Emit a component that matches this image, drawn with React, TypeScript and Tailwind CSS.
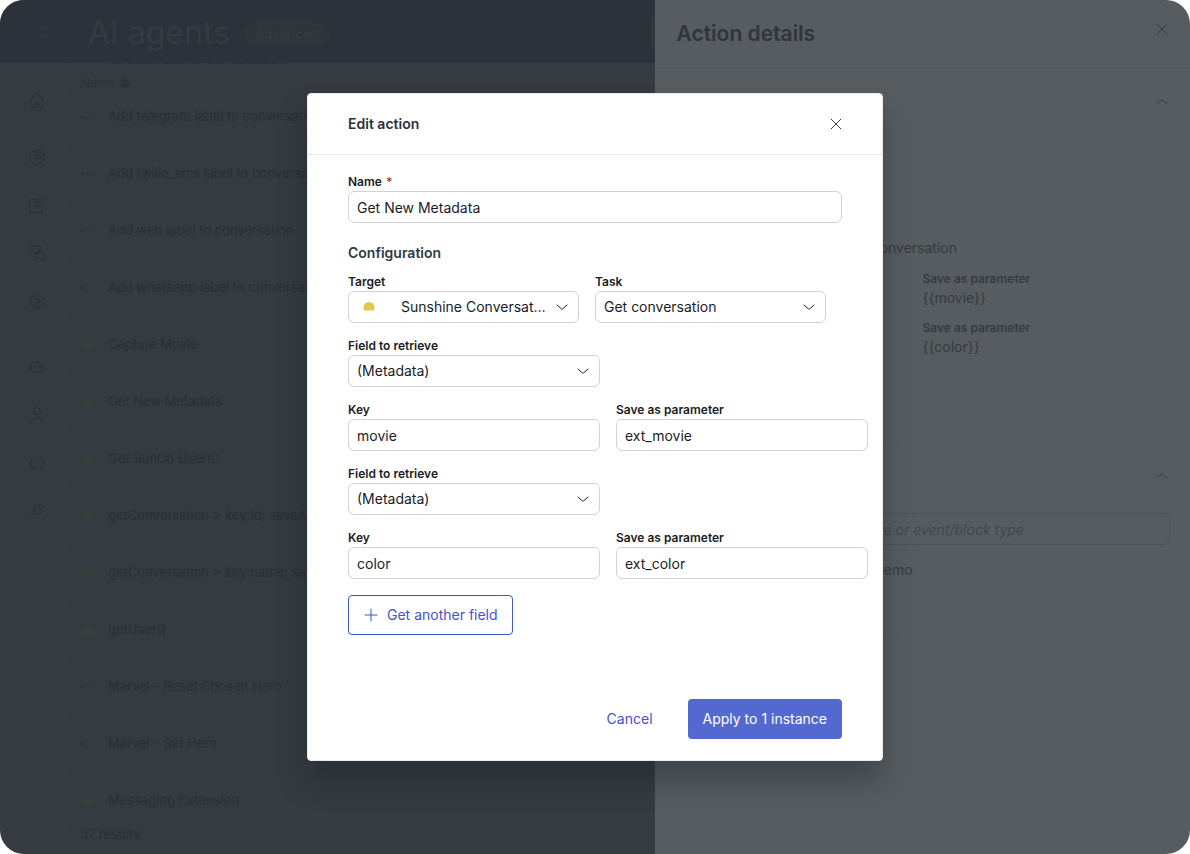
import type { ReactNode } from "react";

type Action = { name: string; sunshine?: boolean };

const actions: Action[] = [
  { name: "Add ios label to conversation" },
  { name: "Add telegram label to conversation" },
  { name: "Add twilio_sms label to conversation" },
  { name: "Add web label to conversation" },
  { name: "Add whatsapp label to conversation" },
  { name: "Capture Movie", sunshine: true },
  { name: "Get New Metadata", sunshine: true },
  { name: "Get SunCo UserID", sunshine: true },
  { name: "getConversation > key:id; saveAs:id", sunshine: true },
  { name: "getConversation > key:name; saveAs:name", sunshine: true },
  { name: "getUser()", sunshine: true },
  { name: "Marvel - Reset Chosen Hero" },
  { name: "Marvel - Set Hero" },
  { name: "Messaging Extension", sunshine: true },
];

function Icon({ children, className = "size-4" }: { children: ReactNode; className?: string }) {
  return (
    <svg
      viewBox="0 0 16 16"
      fill="none"
      stroke="currentColor"
      strokeLinecap="round"
      strokeLinejoin="round"
      className={`shrink-0 ${className}`}
      aria-hidden="true"
    >
      {children}
    </svg>
  );
}

const CloseIcon = () => (
  <Icon className="size-4">
    <path d="M3 3l10 10M13 3L3 13" />
  </Icon>
);

const ChevronUp = () => (
  <Icon className="size-4">
    <path d="M3 10l4.6-4a.6.6 0 0 1 .8 0L13 10" />
  </Icon>
);

// Sidebar entries, each with the gap that separates it from the one above
const navItems: { label: string; space: string; icon: ReactNode }[] = [
  {
    label: "Home",
    space: "mt-0",
    icon: <path d="M2.500 8.500H.8L7.600 1a.6.6 0 0 1 .8 0l6.800 7.500h-1.700M2.500 8.500v6c0 .6.3 1 .8 1h2.900v-3.700c0-.6.4-1 1-1h1.600c.6 0 1 .4 1 1v3.700h2.900c.5 0 .8-.4.8-1v-6" />,
  },
  {
    label: "Analytics",
    space: "mt-[41px]",
    icon: <path d="M6.500 1.500a7 7 0 1 0 8 8h-8zM9.300.6v6.100h6.100A6.200 6.200 0 0 0 9.300.6z" />,
  },
  {
    label: "Compose",
    space: "mt-8",
    icon: <path d="M7.500 2.500h-6c-.6 0-1 .4-1 1v11c0 .6.4 1 1 1h11c.6 0 1-.4 1-1v-6M12.800.9a1 1 0 0 1 1.400 0l1 1a1 1 0 0 1 0 1.400L9.300 9.200 6.500 9.700 7 6.800z" />,
  },
  {
    label: "Conversations",
    space: "mt-8",
    icon: <path d="M3.300 6.300L1.800 8.300V6A2.800 2.800 0 0 1 3.300.8h6a2.700 2.700 0 0 1 0 5.400M7.200 7.700h5.600a2.700 2.700 0 0 1 1.700 4.800v2.800l-2.400-2.300H7.200a2.600 2.600 0 0 1 0-5.300z" />,
  },
  {
    label: "Settings",
    space: "mt-8",
    icon: (
      <>
        <path d="M6.600.8h2.800l.5 2.200 1.500.9 2.200-.7 1.400 2.400-1.600 1.600v1.700l1.600 1.600-1.400 2.400-2.200-.7-1.500.9-.5 2.200H6.600l-.5-2.200-1.500-.9-2.200.7L1 10.500l1.600-1.600V7.200L1 5.600l1.400-2.400 2.200.7L6.100 3z" />
        <circle cx="8" cy="8" r="2.600" />
      </>
    ),
  },
  {
    label: "Bots",
    space: "mt-[50px]",
    icon: (
      <>
        <rect x="2.500" y="3.500" width="11" height="10" rx="2" />
        <path d="M8 3.500V2M.5 6.500v4M15.500 6.500v4M5 11.500h.1M7 11.500h.1M9 11.500h.1M11 11.500h.1" />
        <circle cx="5.600" cy="7.500" r="1" />
        <circle cx="10.400" cy="7.500" r="1" />
      </>
    ),
  },
  {
    label: "Users",
    space: "mt-8",
    icon: (
      <>
        <circle cx="8" cy="4" r="3.500" />
        <path d="M2.200 15.500a5.900 5.900 0 0 1 11.600 0" />
      </>
    ),
  },
  {
    label: "Parameters",
    space: "mt-8",
    icon: <path d="M5 2H4.300C3 2 2.300 2.800 2.300 4v2.300C2.300 7.300 1.500 8 .5 8c1 0 1.800.7 1.800 1.700V12c0 1.200.7 2 2 2H5M11 2h.7c1.300 0 2 .8 2 2v2.300c0 1 .8 1.700 1.800 1.700-1 0-1.800.7-1.800 1.700V12c0 1.200-.7 2-2 2H11" />,
  },
  {
    label: "Integrations",
    space: "mt-8",
    icon: <path d="M.5 15.500L5 11M9.500 3.500L12.500.5M12.500 6.500l3-3M8 2.500l5.500 5.500-2.600 2.600a2 2 0 0 1-2.800 0L5.400 7.900a2 2 0 0 1 0-2.800z" />,
  },
];

function Sun({ className }: { className: string }) {
  return (
    <svg viewBox="0 0 12 10" className={`h-[10px] w-3 shrink-0 ${className}`} aria-hidden="true">
      <path d="M1.100 9.500C.7 8.600.5 7.600.5 6.500a5.500 5.500 0 0 1 11 0c0 1.100-.2 2.100-.6 3z" fill="currentColor" />
    </svg>
  );
}

function ActionIcon({ sunshine }: { sunshine?: boolean }) {
  if (sunshine) {
    return (
      <span className="flex w-4 shrink-0 justify-center">
        <Sun className="text-[#383f3b]" />
      </span>
    );
  }
  return (
    <svg viewBox="0 0 16 4" className="h-1 w-4 shrink-0" aria-hidden="true">
      <circle cx="2" cy="2" r="1.600" fill="#2b323b" />
      <circle cx="8" cy="2" r="1.600" fill="#2f3a3a" />
      <circle cx="14" cy="2" r="1.600" fill="#313a3b" />
    </svg>
  );
}

function Field({ id, label, required, className = "", children }: {
  id: string;
  label: string;
  required?: boolean;
  className?: string;
  children: ReactNode;
}) {
  return (
    <div className={`flex flex-col ${className}`}>
      <label htmlFor={id} className="h-5 text-xs leading-[22px] font-semibold text-[#1a1c1f]">
        {label}
        {required && <span className="ml-1 text-[#cc3340]">*</span>}
      </label>
      {children}
    </div>
  );
}

function TextInput({ id, value }: { id: string; value: string }) {
  return (
    <input
      id={id}
      type="text"
      defaultValue={value}
      className="h-8 w-full rounded-md border border-[#d0d2d5] bg-white px-2 text-sm text-[#1a1c1f]"
    />
  );
}

function Select({ id, value, sunshine }: { id: string; value: string; sunshine?: boolean }) {
  return (
    <div className="relative">
      <select
        id={id}
        defaultValue={value}
        className={`h-8 w-full appearance-none truncate rounded-md border border-[#d0d2d5] bg-white pr-[30px] text-sm text-[#1a1c1f] ${
          sunshine ? "pl-[52px]" : "pl-2"
        }`}
      >
        <option>{value}</option>
      </select>
      {sunshine && <Sun className="absolute top-[10px] left-[15px] text-[#e5c652]" />}
      <Icon className="pointer-events-none absolute top-2 right-[9px] size-4 text-[#1a1c1f]">
        <path d="M3 6l4.600 4a.6.6 0 0 0 .8 0L13 6" />
      </Icon>
    </div>
  );
}

function AgentsPage() {
  return (
    <div className="flex min-w-0 flex-1 flex-col bg-[#363a41] text-[#2b2f36]">
      <header className="relative z-10 flex h-[63px] shrink-0 items-center bg-[#2c3239] text-[#363a42]">
        <button aria-label="Menu" className="ml-9 flex text-[#32373e]">
          <Icon className="size-4">
            <path d="M1.500 3.500h13M1.500 8h13M1.500 12.500h13" />
          </Icon>
        </button>
        <h1 className="mt-[2px] ml-9 text-[32px] leading-10">AI agents</h1>
        <span className="mt-1 ml-[14px] rounded-full bg-[#2e353b] px-[11px] text-[13px] leading-6 font-semibold">Advanced</span>
        {/* control that the details panel partly covers */}
        <span className="absolute right-0 h-[30px] w-1 rounded-l bg-[#31373d]" />
      </header>

      <div className="flex min-h-0 flex-1">
        <nav className="flex w-[71px] shrink-0 flex-col items-center border-r border-[#343840] pt-[29px] pl-1 text-[#2a2f37]">
          {navItems.map((item) => (
            <a key={item.label} href="#" aria-label={item.label} className={item.space}>
              <Icon className="size-4">{item.icon}</Icon>
            </a>
          ))}
        </nav>

        <main className="relative min-w-0 flex-1 overflow-hidden">
          <div className="absolute top-[10px] left-[10px] flex items-center gap-[6px] text-xs leading-5 text-[#2c313b]">
            Name
            <svg viewBox="0 0 10 12" className="h-3 w-[10px]" fill="#2b303d" aria-hidden="true">
              <path d="M5 .5L10 5.300H0zM5 11.500L0 6.700h10z" />
            </svg>
          </div>
          <ul className="-mt-[31px]">
            {actions.map((action) => (
              <li key={action.name} className="flex h-[57px] items-center border-b border-[#353940] pl-[9px] text-[13px] whitespace-nowrap">
                <ActionIcon sunshine={action.sunshine} />
                <span className="ml-3">{action.name}</span>
              </li>
            ))}
          </ul>
          <p className="-mt-1 pl-[9px] text-[13px] leading-4">37 results</p>
        </main>
      </div>
    </div>
  );
}

function DetailsPanel() {
  return (
    <aside className="flex w-[45%] shrink-0 flex-col bg-[#575c60] text-sm text-[#363b41]">
      <header className="flex h-[68px] shrink-0 items-center justify-between border-b border-[#53585c] pr-5 pl-[22px]">
        <h2 className="text-[21px] font-semibold text-[#30353d]">Action details</h2>
        <button aria-label="Close details" className="mb-[10px]">
          <CloseIcon />
        </button>
      </header>
      <section className="h-[378px] border-b border-[#54595d] pr-5 pl-[22px]">
        <div className="flex justify-end pt-[26px]">
          <button aria-label="Collapse summary">
            <ChevronUp />
          </button>
        </div>
        <p className="mt-32 pl-[168px] leading-5">Get conversation</p>
        <dl className="mt-3 ml-[246px]">
          <dt className="text-xs leading-[18px] font-semibold">Save as parameter</dt>
          <dd className="mb-[11px] leading-5">{"{{movie}}"}</dd>
          <dt className="text-xs leading-[18px] font-semibold">Save as parameter</dt>
          <dd className="leading-5">{"{{color}}"}</dd>
        </dl>
      </section>
      <section className="h-[189px] border-b border-[#54595d] pr-5 pl-[22px]">
        <div className="flex justify-end pt-[22px]">
          <button aria-label="Collapse usage">
            <ChevronUp />
          </button>
        </div>
        <input
          type="search"
          aria-label="Filter usage"
          placeholder="Filter by name, use case name or event/block type"
          className="mt-[29px] h-8 w-full rounded-md border border-[#4e5358] bg-transparent px-[11px] italic placeholder:text-[#42474c]"
        />
        <p className="mt-[15px] pl-[131px] leading-5">Metadata Demo</p>
      </section>
    </aside>
  );
}

function EditActionModal() {
  return (
    <div className="absolute inset-0 z-20 flex items-center justify-center">
      <div
        role="dialog"
        aria-modal="true"
        aria-labelledby="edit-title"
        className="w-full max-w-xl rounded border border-[#e9ebed] bg-white shadow-[0_20px_28px_rgba(23,28,35,0.35)]"
      >
        <header className="flex items-center justify-between border-b border-[#e4e6e8] py-5 pr-[38px] pl-10">
          <h2 id="edit-title" className="text-sm leading-5 font-semibold text-[#2b3138]">Edit action</h2>
          <button aria-label="Close" className="text-[#39434d]">
            <CloseIcon />
          </button>
        </header>

        <form className="flex flex-col px-10 pt-4">
          <Field id="name" label="Name" required>
            <TextInput id="name" value="Get New Metadata" />
          </Field>

          <h3 className="mt-5 mb-2 text-sm leading-5 font-semibold text-[#2f3941]">Configuration</h3>
          <div className="flex gap-4">
            <Field id="target" label="Target" className="w-[231px]">
              <Select id="target" value="Sunshine Conversations" sunshine />
            </Field>
            <Field id="task" label="Task" className="w-[231px]">
              <Select id="task" value="Get conversation" />
            </Field>
          </div>

          {["movie", "color"].map((key) => (
            <div key={key}>
              <Field id={`field-${key}`} label="Field to retrieve" className="mt-3 w-[252px]">
                <Select id={`field-${key}`} value="(Metadata)" />
              </Field>
              <div className="mt-3 flex gap-4">
                <Field id={`key-${key}`} label="Key" className="w-[252px] shrink-0">
                  <TextInput id={`key-${key}`} value={key} />
                </Field>
                <Field id={`param-${key}`} label="Save as parameter" className="w-[252px] shrink-0">
                  <TextInput id={`param-${key}`} value={`ext_${key}`} />
                </Field>
              </div>
            </div>
          ))}

          <button
            type="button"
            className="mt-4 flex h-10 items-center gap-2 self-start rounded border border-[#3f55c8] px-[14px] text-sm text-[#3f55c8]"
          >
            <Icon className="size-4">
              <path d="M8 2v12M2 8h12" />
            </Icon>
            Get another field
          </button>
        </form>

        <footer className="flex items-center justify-end gap-5 px-10 pt-16 pb-[21px] text-sm">
          <button className="h-10 px-[15px] text-[#3f55c8]">Cancel</button>
          <button className="h-10 rounded bg-[#5469cf] px-[15px] text-white">Apply to 1 instance</button>
        </footer>
      </div>
    </div>
  );
}

export default function App() {
  return (
    <div className="bg-white font-[Inter,sans-serif]">
      <div className="relative flex h-screen overflow-hidden rounded-3xl">
        <AgentsPage />
        <DetailsPanel />
        <EditActionModal />
      </div>
    </div>
  );
}
